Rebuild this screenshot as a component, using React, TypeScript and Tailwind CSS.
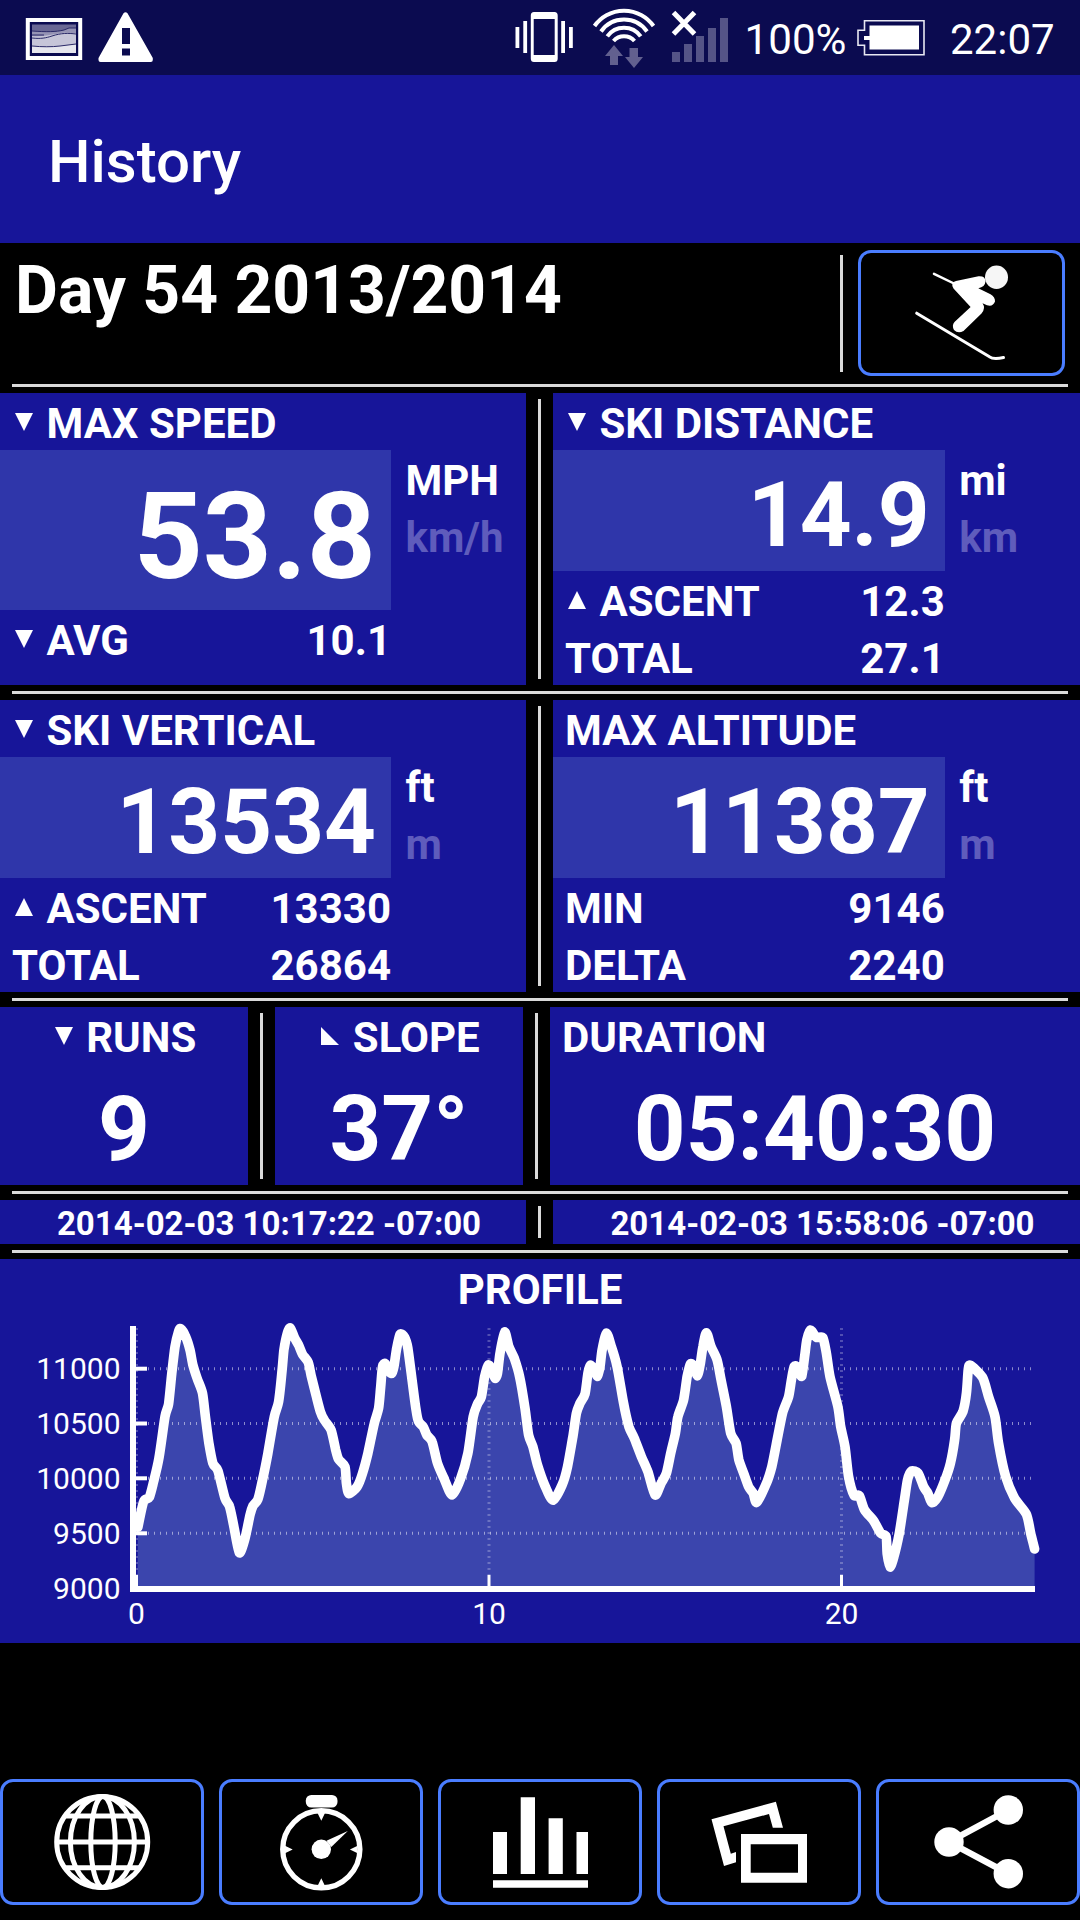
import React from "react";

type Marker = "down" | "up" | "slope";

const markerPoints: Record<Marker, string> = {
  down: "0,0 18,0 9,18",
  up: "9,0 18,18 0,18",
  slope: "0,0 18,18 0,18",
};

function Label({ marker, children }: { marker?: Marker; children: React.ReactNode }) {
  return (
    <div className="flex h-[57px] text-[42px] leading-[61px] whitespace-nowrap">
      {marker && (
        <svg className="mt-5 mr-[13.5px] ml-[3px] h-[18px] w-[18px] shrink-0" viewBox="0 0 18 18" fill="#fff">
          <polygon points={markerPoints[marker]} />
        </svg>
      )}
      <span>{children}</span>
    </div>
  );
}

function HLine() {
  return <div className="mx-3 my-1.5 h-[3px] shrink-0 bg-[#dadada]" />;
}

function VLine() {
  return <div className="mx-3 my-1.5 w-[3px] shrink-0 bg-[#dadada]" />;
}

type StatProps = {
  title: string;
  marker?: Marker;
  value: string;
  large?: boolean;
  units: [string, string];
  rows: { marker?: Marker; label: string; value: string }[];
};

function Stat({ title, marker, value, large, units, rows }: StatProps) {
  return (
    <section className="h-[292px] min-w-0 bg-[#171599]">
      <div className="pl-3">
        <Label marker={marker}>{title}</Label>
      </div>
      <div className="grid grid-cols-[391fr_135fr]">
        <div>
          <div
            className={
              large
                ? "h-[160px] overflow-hidden bg-[#2f36aa] pr-[15px] text-right text-[120.5px] leading-[173px]"
                : "h-[121px] overflow-hidden bg-[#2f36aa] pr-[15px] text-right text-[90.5px] leading-[131px]"
            }
          >
            {value}
          </div>
          {rows.map((r) => (
            <div key={r.label} className="flex justify-between pl-3">
              <Label marker={r.marker}>{r.label}</Label>
              <Label>{r.value}</Label>
            </div>
          ))}
        </div>
        <div className="pl-[14.5px]">
          <Label>{units[0]}</Label>
          <div className="text-[#5f5cbc]">
            <Label>{units[1]}</Label>
          </div>
        </div>
      </div>
    </section>
  );
}

function StatusBar() {
  return (
    <header className="h-[75px] bg-[#0b0b50]">
      <svg className="block" width="1080" height="75" viewBox="0 0 1080 75">
        <rect x="27.8" y="20" width="52.4" height="38" fill="none" stroke="#fff" strokeWidth="4" />
        <rect x="32" y="24.5" width="44" height="28.5" fill="#6a6894" />
        <path d="M32 31c14 1 24 1 32-1l5-2h7v25H32z" fill="#9593b4" />
        <path d="M32 36c9 1 16-1 24-2 8-2 14-1 20-1v20H32z" fill="#c6c5d8" />
        <path d="M32 46c10 1 20 1 28 0l16-2v9H32z" fill="#e6e6ee" />
        <path
          d="M32 31c14 1 24 1 32-1l5-2h7M32 38c9 1 14 0 20-2 9-3 16-3 24-2M32 35h12M32 46c10 1 20 1 28 0l16-2"
          fill="none"
          stroke="#2a2968"
          strokeWidth="1"
        />
        <path
          fillRule="evenodd"
          d="M123.500 13.300Q125.500 11 127.500 13.300L152.800 58v2q0 2-2 2h-50.300q-2 0-2-2v-2zM122 28v16h8V28zM122 48.500v7h8v-7z"
          fill="#fff"
        />
        <g fill="#fff">
          <path
            fillRule="evenodd"
            d="M534 12h20.500q3.200 0 3.200 3.500v43q0 3.500-3.200 3.500H534q-3.200 0-3.200-3.500v-43q0-3.500 3.200-3.500zM533.700 19v36h21v-36z"
          />
          <rect x="523.3" y="21" width="3.800" height="32" />
          <rect x="515.500" y="27" width="3.800" height="21" />
          <rect x="561.200" y="21" width="3.800" height="32" />
          <rect x="569" y="27" width="3.800" height="21" />
        </g>
        <g fill="none" stroke="#fff" strokeWidth="4">
          <path d="M594.500 26A36 36 0 0 1 653.500 26" />
          <path d="M601 31.500A28 28 0 0 1 647 31.500" />
          <path d="M607.300 36.300A20.500 20.500 0 0 1 640.700 36.300" />
          <path d="M613.500 41A14 14 0 0 1 634.500 41" />
          <path d="M673.500 12.500 694.500 34M694.500 12.500 673.500 34" strokeWidth="5" />
        </g>
        <g fill="#62608f">
          <path d="M614 45 623 56h-5v9h-8v-9h-5z" />
          <path d="M634 68 625 57h4.500v-9h8.500v9h5z" />
        </g>
        <path
          fill="#555487"
          d="M672 52h8v10h-8zM684 44h8v18h-8zM696 36h8v26h-8zM708 28h8v34h-8zM720 18h8v44h-8z"
        />
        <path
          d="M864.500 20.700h59.500v34h-59.500v-9.400h-6.500v-15h6.500z"
          fill="none"
          stroke="#e8e8f2"
          strokeWidth="1.600"
        />
        <path d="M869.500 25.500H919V49.500H869.500V40H864V36h5.500z" fill="#fff" />
        <text x="744.500" y="54.300" fill="#fff" fontSize="42" textLength="102" lengthAdjust="spacingAndGlyphs">
          100%
        </text>
        <text x="950" y="54.300" fill="#fff" fontSize="42">
          22:07
        </text>
      </svg>
    </header>
  );
}

// Elevation samples, stored on a fine integer grid and scaled down to chart pixels.
const samples: [number, number][] = [
  [386, 832], [402, 755], [418, 742], [430, 695], [445, 625], [462, 500], [472, 462], [481, 370], [490, 290],
  [500, 244], [506, 236], [520, 260], [532, 300], [540, 345], [552, 385], [567, 430], [575, 500], [585, 580],
  [596, 640], [610, 662], [630, 745], [643, 770], [655, 830], [670, 908], [685, 870], [700, 795], [708, 768],
  [722, 748], [735, 690], [750, 610], [768, 500], [780, 455], [790, 360], [795, 300], [805, 248], [813, 234],
  [824, 262], [836, 285], [847, 313], [863, 337], [872, 380], [886, 440], [897, 485], [908, 510], [927, 540],
  [940, 600], [948, 628], [966, 650], [970, 700], [977, 731], [1000, 710], [1015, 670], [1030, 610], [1048, 520],
  [1060, 475], [1066, 410], [1071, 350], [1079, 341], [1090, 365], [1097, 370], [1103, 350], [1110, 300],
  [1120, 253], [1133, 262], [1142, 295], [1155, 400], [1165, 480], [1172, 515], [1185, 530], [1195, 555],
  [1210, 575], [1225, 640], [1243, 685], [1266, 735], [1290, 685], [1310, 610], [1325, 500], [1337, 462],
  [1348, 440], [1357, 380], [1367, 345], [1378, 360], [1386, 385], [1393, 370], [1400, 310], [1413, 246],
  [1425, 290], [1440, 325], [1455, 380], [1470, 475], [1480, 555], [1492, 590], [1505, 645], [1525, 705],
  [1548, 751], [1574, 705], [1589, 650], [1604, 560], [1614, 490], [1624, 460], [1638, 432], [1646, 370],
  [1653, 345], [1666, 362], [1673, 379], [1680, 350], [1686, 300], [1698, 249], [1712, 290], [1728, 350],
  [1746, 460], [1761, 530], [1776, 565], [1796, 620], [1814, 665], [1834, 735], [1851, 700], [1866, 670],
  [1878, 610], [1891, 550], [1898, 500], [1914, 450], [1924, 380], [1933, 342], [1944, 350], [1953, 377],
  [1961, 340], [1968, 290], [1978, 248], [1991, 290], [2008, 330], [2019, 390], [2034, 470], [2046, 550],
  [2061, 580], [2069, 630], [2084, 675], [2096, 710], [2109, 730], [2119, 757], [2146, 700], [2161, 650],
  [2176, 570], [2191, 490], [2208, 440], [2216, 390], [2224, 349], [2236, 355], [2245, 379], [2253, 320],
  [2259, 270], [2269, 240], [2286, 262], [2304, 263], [2314, 310], [2324, 380], [2346, 470], [2354, 530],
  [2366, 590], [2376, 680], [2391, 735], [2406, 737], [2421, 780], [2446, 812], [2466, 850], [2481, 860],
  [2484, 910], [2492, 951], [2503, 920], [2518, 850], [2531, 760], [2541, 690], [2552, 663], [2571, 670],
  [2586, 710], [2598, 730], [2609, 758], [2626, 740], [2646, 690], [2661, 640], [2673, 570], [2678, 520],
  [2696, 485], [2706, 430], [2711, 360], [2717, 346], [2751, 382], [2768, 440], [2786, 500], [2796, 580],
  [2816, 680], [2841, 745], [2874, 793], [2886, 850], [2897, 897],
];

const points = samples.map(([x, y]) => [x / 2.8, y / 3 - 66]);

// Cubic segments through every sample, with tangents taken from its neighbours.
const line = points.reduce((d, [x, y], i) => {
  if (i === 0) return `M${x.toFixed(1)} ${y.toFixed(1)}`;
  const [px, py] = points[i - 1];
  const [ax, ay] = points[Math.max(0, i - 2)];
  const [nx, ny] = points[Math.min(points.length - 1, i + 1)];
  const c = [px + (x - ax) / 8, py + (y - ay) / 8, x - (nx - px) / 8, y - (ny - py) / 8, x, y];
  return `${d}C${c.map((v) => v.toFixed(1)).join(" ")}`;
}, "");

const yTicks = [
  { label: "11000", y: 52.7 },
  { label: "10500", y: 107.500 },
  { label: "10000", y: 162.300 },
  { label: "9500", y: 217.300 },
];

const xTicks = [
  { label: "0", x: 136.500 },
  { label: "10", x: 489 },
  { label: "20", x: 841.500 },
];

function ProfileChart() {
  return (
    <svg className="block" width="1080" height="327" viewBox="0 0 1080 327">
      <path d={`${line}V270H137.500Z`} fill="#3b45ad" />
      {yTicks.map((t) => (
        <path key={t.label} d={`M148 ${t.y}H1034`} stroke="#fff" strokeOpacity="0.5" strokeWidth="3" strokeDasharray="1 5" />
      ))}
      {xTicks.map((t) => (
        <path key={t.label} d={`M${t.x} 12V259`} stroke="#fff" strokeOpacity="0.25" strokeWidth="3" strokeDasharray="2 4" />
      ))}
      <path d={line} fill="none" stroke="#fff" strokeWidth="9.600" strokeLinejoin="round" strokeLinecap="round" />
      <path d="M130 10h6v260h899v6H130z" fill="#fff" />
      {yTicks.map((t) => (
        <path key={t.label} d={`M136 ${t.y}H147`} stroke="#fff" strokeWidth="4" />
      ))}
      {xTicks.map((t) => (
        <path key={t.label} d={`M${t.x} 259V271`} stroke="#fff" strokeWidth="3" />
      ))}
      <g fill="#fff" fontSize="30" fontWeight="400">
        {yTicks.map((t) => (
          <text key={t.label} x="120.500" y={t.y + 10.500} textAnchor="end">
            {t.label}
          </text>
        ))}
        <text x="120.500" y="282.500" textAnchor="end">
          9000
        </text>
        {xTicks.map((t) => (
          <text key={t.label} x={t.x} y="307.500" textAnchor="middle">
            {t.label}
          </text>
        ))}
      </g>
    </svg>
  );
}

function SkierIcon() {
  return (
    <svg width="201" height="120" viewBox="861 253 201 120" fill="#fff" stroke="#fff" strokeLinecap="round" strokeLinejoin="round">
      <ellipse cx="996.500" cy="277.300" rx="11.500" ry="11.700" fill="#f6f6f6" stroke="none" />
      <path d="M934 273.800 955 284" strokeWidth="2.500" fill="none" />
      <path
        d="M956 281 978.500 276.300Q985.500 275.800 985.500 281.500 985 287 978.300 288.200L990.500 294.200Q995.300 297 995 301.500 993 307 987 305.200L982.500 303.200Q986 308 981.500 313.500L963.500 331Q958 334 954 330 951.500 325.500 954.500 322L970.600 307 953.500 288.500Q950 282.500 956 281z"
        stroke="none"
      />
      <path d="M916.700 313.200 989.500 356.800Q993.500 360 1003.500 357.500" strokeWidth="3" fill="none" />
    </svg>
  );
}

function GlobeIcon() {
  return (
    <svg width="198" height="120" viewBox="3 1782 198 120" fill="none" stroke="#fff" strokeWidth="5">
      <circle cx="102.200" cy="1842" r="45.500" />
      <ellipse cx="103" cy="1842" rx="12.200" ry="45.500" />
      <ellipse cx="102.400" cy="1842" rx="32" ry="45.500" />
      <path d="M56 1842h92M65 1816h74.500M65 1867.800h74.500" />
    </svg>
  );
}

function StopwatchIcon() {
  return (
    <svg width="198" height="120" viewBox="222 1782 198 120" fill="#fff">
      <rect x="305.800" y="1795" width="31.700" height="12.500" rx="5.500" />
      <circle cx="321.300" cy="1849.300" r="38.600" fill="none" stroke="#fff" strokeWidth="5.300" />
      <circle cx="321.300" cy="1849.300" r="9.700" />
      <path d="M347.800 1831 326.500 1840.700 331.300 1847z" />
      <path d="M317.500 1813h7.500l-3.700 7.700zM317.500 1886h7.500l-3.700-7.700zM285 1845.700v7.500l7.700-3.700zM357.600 1845.700v7.500l-7.700-3.700z" />
    </svg>
  );
}

function BarsIcon() {
  return (
    <svg width="198" height="120" viewBox="441 1782 198 120" fill="#fff">
      <path d="M493 1832h14v42h-14zM520.700 1797.300h14.300V1874h-14.300zM548.600 1818.300h14.200V1874h-14.200zM576.500 1832H588v42h-11.500zM493 1880.300h95v7.400h-95z" />
    </svg>
  );
}

function PhotosIcon() {
  return (
    <svg width="198" height="120" viewBox="660 1782 198 120" fill="#fff">
      <path d="M741 1834h66v48.700h-66zM750.700 1844.300v28.400H798v-28.400z" fillRule="evenodd" />
      <path d="M711.500 1819.300 775.900 1801.700 783 1827.700H772.800L769 1814 723.500 1826.300 730.800 1853.700 736 1852V1862.300L724 1866z" />
    </svg>
  );
}

function ShareIcon() {
  return (
    <svg width="198" height="120" viewBox="879 1782 198 120" fill="#fff">
      <path d="M1008.300 1810 949 1842 1008.300 1873.700" fill="none" stroke="#fff" strokeWidth="6.500" />
      <circle cx="949" cy="1842" r="14.700" />
      <circle cx="1008.300" cy="1810" r="14.700" />
      <circle cx="1008.300" cy="1873.700" r="14.700" />
    </svg>
  );
}

const actions = [
  { name: "Map", Icon: GlobeIcon },
  { name: "Timing", Icon: StopwatchIcon },
  { name: "Charts", Icon: BarsIcon },
  { name: "Photos", Icon: PhotosIcon },
  { name: "Share", Icon: ShareIcon },
];

export default function App() {
  return (
    <div className="flex h-[1920px] w-[1080px] flex-col overflow-hidden bg-black font-[Roboto,sans-serif] text-white">
      <StatusBar />
      <h1 className="h-[168px] bg-[#171599] pl-12 text-[60px] leading-[173px] font-medium">History</h1>

      <main className="flex flex-col font-bold">
        <div className="flex h-[135px]">
          <h2 className="flex-1 pl-[15px] text-[66px] leading-[96px]">Day 54 2013/2014</h2>
          <div className="mt-3 mr-[15px] h-[117px] w-[3px] bg-[#dadada]" />
          <button className="mt-[7px] mr-[15px] h-[126px] w-[207px] rounded-[13px] border-3 border-[#4a7dff]" aria-label="Activity">
            <SkierIcon />
          </button>
        </div>
        <HLine />
        <div className="grid grid-cols-[526px_27px_527px]">
          <Stat
            title="MAX SPEED"
            marker="down"
            value="53.8"
            large
            units={["MPH", "km/h"]}
            rows={[{ marker: "down", label: "AVG", value: "10.1" }]}
          />
          <VLine />
          <Stat
            title="SKI DISTANCE"
            marker="down"
            value="14.9"
            units={["mi", "km"]}
            rows={[
              { marker: "up", label: "ASCENT", value: "12.3" },
              { label: "TOTAL", value: "27.1" },
            ]}
          />
        </div>
        <HLine />
        <div className="grid grid-cols-[526px_27px_527px]">
          <Stat
            title="SKI VERTICAL"
            marker="down"
            value="13534"
            units={["ft", "m"]}
            rows={[
              { marker: "up", label: "ASCENT", value: "13330" },
              { label: "TOTAL", value: "26864" },
            ]}
          />
          <VLine />
          <Stat
            title="MAX ALTITUDE"
            value="11387"
            units={["ft", "m"]}
            rows={[
              { label: "MIN", value: "9146" },
              { label: "DELTA", value: "2240" },
            ]}
          />
        </div>
        <HLine />
        <div className="flex h-[178px]">
          <section className="flex w-[248px] flex-col items-center bg-[#171599]">
            <Label marker="down">RUNS</Label>
            <div className="text-[90.5px] leading-[131px]">9</div>
          </section>
          <VLine />
          <section className="flex w-[248px] flex-col items-center bg-[#171599]">
            <Label marker="slope">SLOPE</Label>
            <div className="text-[90.5px] leading-[131px]">37°</div>
          </section>
          <VLine />
          <section className="flex-1 bg-[#171599]">
            <div className="pl-3">
              <Label>DURATION</Label>
            </div>
            <div className="text-center text-[90.5px] leading-[131px]">05:40:30</div>
          </section>
        </div>
        <HLine />
        <div className="grid grid-cols-[526px_27px_527px] grid-rows-[44px] text-center text-[33px] leading-[47px]">
          <div className="bg-[#171599] pl-3">2014-02-03 10:17:22 -07:00</div>
          <VLine />
          <div className="bg-[#171599] pl-3">2014-02-03 15:58:06 -07:00</div>
        </div>
        <HLine />
        <section className="flex h-[384px] flex-col items-center bg-[#171599]">
          <Label>PROFILE</Label>
          <ProfileChart />
        </section>
      </main>

      <nav className="mt-auto mb-[15px] grid grid-cols-5 gap-[15px]">
        {actions.map(({ name, Icon }) => (
          <button key={name} aria-label={name} className="h-[126px] rounded-[13px] border-3 border-[#4a7dff]">
            <Icon />
          </button>
        ))}
      </nav>
    </div>
  );
}
